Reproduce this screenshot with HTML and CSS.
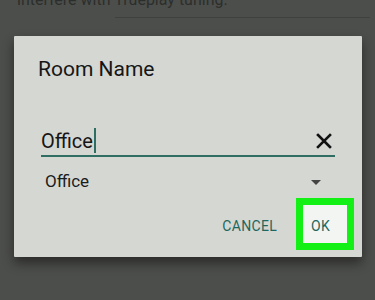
FILE: index.html
```html
<!doctype html>
<html lang="en">
  <head>
    <meta charset="UTF-8" />
    <meta name="viewport" content="width=device-width, initial-scale=1.0" />
    <title>Room Name</title>
    <link rel="stylesheet" href="styles.css">
  </head>
  <body>
    <div class="page">
      <p class="hint">interfere with Trueplay tuning.</p>
      <div class="divider"></div>
      <h2 class="page-label">Room Name</h2>
    </div>

    <div class="dialog">
      <h1 class="dialog-title">Room Name</h1>
      <div class="field">
        <span class="field-text">Office</span><span class="cursor"></span>
        <svg class="clear" width="16" height="16" viewBox="0 0 16 16">
          <path d="M2 2 L14 14 M14 2 L2 14" stroke="#111" stroke-width="2.6" stroke-linecap="square" />
        </svg>
      </div>
      <div class="select">
        <span>Office</span>
        <svg class="arrow" width="10" height="5" viewBox="0 0 10 5">
          <path d="M0 0 L10 0 L5 5 Z" fill="#444" />
        </svg>
      </div>
      <div class="actions">
        <button class="btn">CANCEL</button>
        <div class="highlight">
          <button class="btn btn-ok">OK</button>
        </div>
      </div>
    </div>
  </body>
</html>
```

FILE: styles.css
```css
body {
  margin: 0;
  height: 300px;
  overflow: hidden;
  background-color: #4c4e4b;
  font-family: Roboto, "Liberation Sans", sans-serif;
}
.page {
  padding: 0 0 0 17px;
}
.hint {
  margin: -10px 0 0 0;
  font-size: 16px;
  line-height: 20px;
  color: #2c2e2b;
}
.divider {
  height: 1px;
  background-color: #3f413e;
  margin: 7px 5px 0 98px;
}
.page-label {
  margin: 14px 0 0 0;
  font-size: 20px;
  font-weight: normal;
  color: #222;
}
.dialog {
  position: absolute;
  left: 14px;
  top: 36px;
  width: 348px;
  background-color: #d5d7d3;
  box-shadow: 0 6px 12px rgba(0, 0, 0, 0.45);
  padding: 21px 0 7px 0;
  border-radius: 1px;
}
.dialog-title {
  margin: 0;
  padding-left: 24px;
  font-size: 21px;
  line-height: 24px;
  font-weight: normal;
  color: #161616;
}
.field {
  display: flex;
  align-items: center;
  margin: 47px 27px 0 27px;
  padding-bottom: 2px;
  border-bottom: 2px solid #2f6e63;
  font-size: 20px;
  line-height: 24px;
  color: #161616;
}
.cursor {
  width: 2px;
  height: 25px;
  margin-left: 1px;
  background-color: #2f6e63;
}
.clear {
  margin-left: auto;
  margin-right: 3px;
}
.select {
  display: flex;
  align-items: center;
  margin-top: 14px;
  padding: 0 41px 0 31px;
  font-size: 17px;
  line-height: 20px;
  color: #1c1c1c;
}
.arrow {
  margin-left: auto;
  margin-top: 2px;
}
.actions {
  display: flex;
  justify-content: flex-end;
  align-items: center;
  margin-top: 7px;
  padding-right: 8px;
}
.btn {
  border: none;
  background: none;
  padding: 0;
  font-family: Roboto, "Liberation Sans", sans-serif;
  font-size: 14px;
  line-height: 16px;
  color: #1e675d;
  letter-spacing: 0.3px;
}
.actions > .btn {
  margin-top: 4px;
}
.highlight {
  margin-left: 19px;
  width: 44px;
  height: 34px;
  border: 7px solid #12f016;
  background-color: #f3f5f3;
  display: flex;
  align-items: center;
  padding-top: 4px;
  box-sizing: content-box;
}
.btn-ok {
  margin-left: 8px;
}
```
